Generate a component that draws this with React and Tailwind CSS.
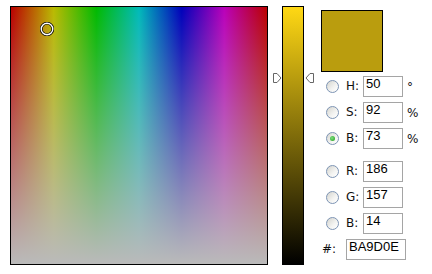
import React from "react";

function Radio({ checked }) {
  return (
    <div className="w-[13px] h-[13px] rounded-full border border-[#7d94b4] bg-[linear-gradient(135deg,#d4d4ce,#f4f4f2_60%,#ffffff)] flex items-center justify-center shrink-0">
      {checked && (
        <div className="w-[5px] h-[5px] rounded-full bg-[radial-gradient(circle_at_40%_40%,#7de07d,#1e9a1e)]" />
      )}
    </div>
  );
}

function Field({ label, value, unit, checked, className = "" }) {
  return (
    <div className={"flex items-center h-[21px] " + className}>
      <div className="ml-[5px]">
        <Radio checked={checked} />
      </div>
      <div className="ml-[7px] w-[17px] text-[12px] leading-[13px] text-[#111] font-['DejaVu_Sans',sans-serif]">
        {label}
      </div>
      <div className="w-[40px] h-[21px] border border-[#a5a5a5] bg-white pl-[2px] text-[13px] leading-[13px] text-black font-['Liberation_Sans',Arial,sans-serif]">
        {value}
      </div>
      {unit && (
        <div className="ml-[4px] text-[12px] leading-[13px] text-[#111] font-['DejaVu_Sans',sans-serif] self-start mt-[5px]">
          {unit}
        </div>
      )}
    </div>
  );
}

export default function App() {
  return (
    <div className="w-[432px] h-[274px] bg-white flex items-start pt-[6px] pl-[10px] overflow-hidden">
      {/* main picker */}
      <div className="relative w-[258px] h-[259px] border border-black bg-[linear-gradient(to_right,#ba0000,#baba00,#00ba00,#00baba,#0000ba,#ba00ba,#ba0000)] shrink-0">
        <div className="absolute inset-0 bg-[linear-gradient(to_bottom,rgba(186,186,186,0),#bababa)]" />
        <svg className="absolute left-[29px] top-[15px]" width="14" height="14" viewBox="0 0 14 14">
          <circle cx="7" cy="7" r="5.8" fill="none" stroke="#000" strokeWidth="2.8" />
          <circle cx="7" cy="7" r="5.8" fill="none" stroke="#fff" strokeWidth="1.4" />
        </svg>
      </div>

      {/* hue / brightness slider */}
      <div className="relative ml-[14px] w-[22px] h-[259px] border border-black bg-[linear-gradient(to_bottom,#ffd814,#000000)] shrink-0">
        <svg className="absolute left-[-10px] top-[66px]" width="9" height="10" viewBox="0 0 9 10">
          <path d="M0.5 0.5 L4 0.5 L8 5 L4 9.5 L0.5 9.5 Z" fill="#fff" stroke="#666" strokeWidth="1" />
        </svg>
        <svg className="absolute left-[22px] top-[66px]" width="9" height="10" viewBox="0 0 9 10">
          <path d="M8.5 0.5 L5 0.5 L1 5 L5 9.5 L8.5 9.5 Z" fill="#fff" stroke="#666" strokeWidth="1" />
        </svg>
      </div>

      {/* right column */}
      <div className="ml-[17px] mt-[4px] flex flex-col">
        <div className="w-[62px] h-[62px] border border-black bg-[#BA9D0E]" />
        <Field className="mt-[4px]" label="H:" value="50" unit="°" />
        <Field className="mt-[5px]" label="S:" value="92" unit="%" />
        <Field className="mt-[5px]" label="B:" value="73" unit="%" checked />
        <Field className="mt-[12px]" label="R:" value="186" />
        <Field className="mt-[5px]" label="G:" value="157" />
        <Field className="mt-[5px]" label="B:" value="14" />
        <div className="flex items-center h-[21px] mt-[5px]">
          <div className="ml-[1px] w-[24px] text-[12px] leading-[13px] text-[#111] font-['DejaVu_Sans',sans-serif]">
            #:
          </div>
          <div className="w-[60px] h-[21px] border border-[#a5a5a5] bg-white pl-[2px] text-[13px] leading-[13px] text-black font-['Liberation_Sans',Arial,sans-serif]">
            BA9D0E
          </div>
        </div>
      </div>
    </div>
  );
}
